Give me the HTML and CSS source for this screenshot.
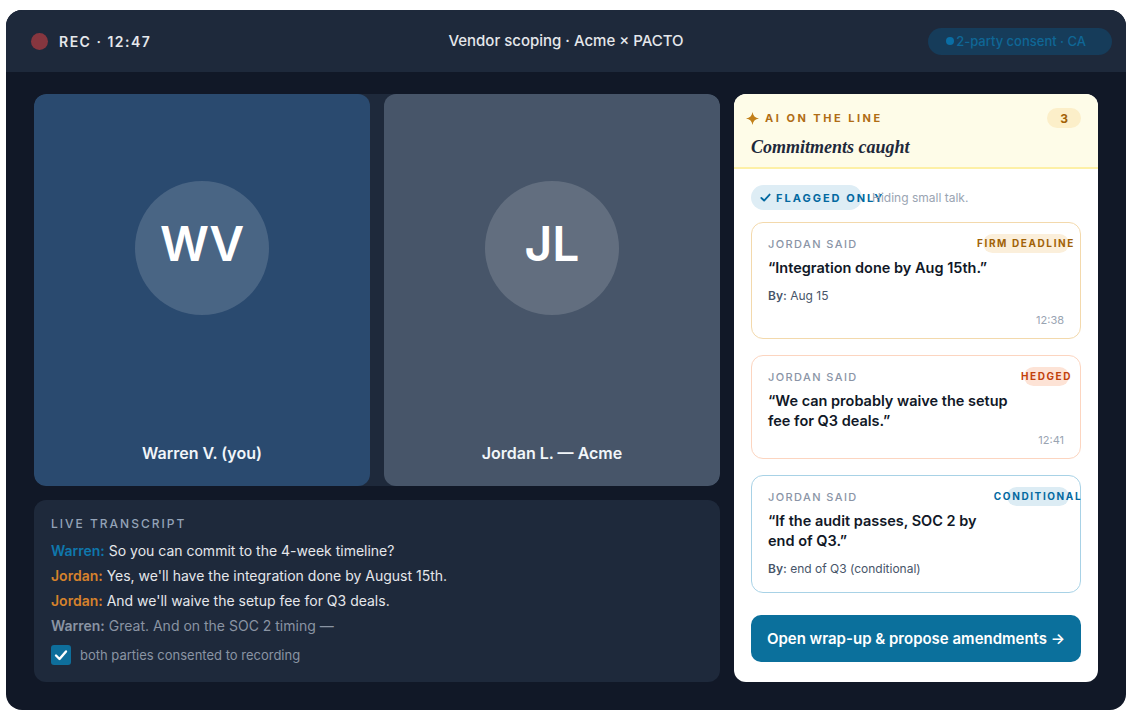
FILE: index.html
```html
<!DOCTYPE html>
<html lang="en">
<head>
<meta charset="utf-8">
<title>Vendor scoping · Acme × PACTO</title>
<link rel="stylesheet" href="styles.css">
</head>
<body>
<div class="frame">
  <header class="topbar">
    <div class="rec"><span class="rec-dot"></span><span>REC · 12:47</span></div>
    <div class="title">Vendor scoping · Acme × PACTO</div>
    <div class="top-right"><span class="consent"><span class="consent-dot"></span>2-party consent · CA</span></div>
  </header>
  <main class="main">
    <section class="left">
      <div class="tiles">
        <div class="tile tile-me">
          <div class="av-wrap"><div class="avatar">WV</div></div>
          <div class="name">Warren V. (you)</div>
        </div>
        <div class="tile tile-them">
          <div class="av-wrap"><div class="avatar">JL</div></div>
          <div class="name">Jordan L. — Acme</div>
        </div>
      </div>
      <div class="transcript">
        <div class="t-label">LIVE TRANSCRIPT</div>
        <div class="t-line"><span class="sp-w">Warren:</span> So you can commit to the 4-week timeline?</div>
        <div class="t-line"><span class="sp-j">Jordan:</span> Yes, we'll have the integration done by August 15th.</div>
        <div class="t-line"><span class="sp-j">Jordan:</span> And we'll waive the setup fee for Q3 deals.</div>
        <div class="t-line t-dim"><span class="sp-d">Warren:</span> Great. And on the SOC 2 timing —</div>
        <div class="consent-row">
          <span class="checkbox"><svg viewBox="0 0 20 20" width="20" height="20"><path d="M5 10.5 L8.5 14 L15 6.5" fill="none" stroke="#fff" stroke-width="2.4" stroke-linecap="round" stroke-linejoin="round"/></svg></span>
          <span class="consent-text">both parties consented to recording</span>
        </div>
      </div>
    </section>
    <aside class="panel">
      <div class="panel-head">
        <div class="ph-row">
          <div class="ph-kicker"><svg class="star" viewBox="0 0 12 12" width="13" height="13"><path d="M6 0 C6.5 3.6 8.4 5.5 12 6 C8.4 6.5 6.5 8.4 6 12 C5.5 8.4 3.6 6.5 0 6 C3.6 5.5 5.5 3.6 6 0 Z" fill="#c2801a"/></svg><span>AI ON THE LINE</span></div>
          <span class="count">3</span>
        </div>
        <div class="ph-title">Commitments caught</div>
      </div>
      <div class="panel-body">
        <div class="filter-row">
          <span class="flag-pill"><svg viewBox="0 0 12 12" width="11" height="11"><path d="M1.5 6.5 L4.5 9.3 L10.5 2.8" fill="none" stroke="#0369a1" stroke-width="2" stroke-linecap="round" stroke-linejoin="round"/></svg><span>FLAGGED ONLY</span></span>
          <span class="hiding">Hiding small talk.</span>
        </div>
        <div class="cards">
          <div class="card card-firm">
            <div class="card-top"><span class="said">JORDAN SAID</span><span class="tag tag-firm">FIRM DEADLINE</span></div>
            <div class="quote">“Integration done by Aug 15th.”</div>
            <div class="by"><b>By:</b> Aug 15</div>
            <div class="time">12:38</div>
          </div>
          <div class="card card-hedged">
            <div class="card-top"><span class="said">JORDAN SAID</span><span class="tag tag-hedged">HEDGED</span></div>
            <div class="quote">“We can probably waive the setup fee for Q3 deals.”</div>
            <div class="time">12:41</div>
          </div>
          <div class="card card-cond">
            <div class="card-top"><span class="said">JORDAN SAID</span><span class="tag tag-cond">CONDITIONAL</span></div>
            <div class="quote">“If the audit passes, SOC 2 by end&nbsp;of&nbsp;Q3.”</div>
            <div class="by"><b>By:</b> end of Q3 (conditional)</div>
          </div>
        </div>
        <button class="cta">Open wrap-up &amp; propose amendments →</button>
      </div>
    </aside>
  </main>
</div>
</body>
</html>
```

FILE: styles.css
```css
* { box-sizing: border-box; }
body {
  margin: 0;
  background: #ffffff;
  font-family: Inter, "Noto Sans", sans-serif;
}
.frame {
  margin: 10px 0 0 6px;
  width: 1120px;
  height: 700px;
  background: #111827;
  border-radius: 16px;
  overflow: hidden;
  display: flex;
  flex-direction: column;
}
.topbar {
  height: 62px;
  flex: none;
  background: #1e293b;
  display: grid;
  grid-template-columns: 1fr auto 1fr;
  align-items: center;
  padding: 0 14px;
}
.rec {
  display: flex;
  align-items: center;
  gap: 11px;
  margin-left: 11px;
  color: #e5e7eb;
  font-size: 14px;
  font-weight: 600;
  letter-spacing: 1.5px;
}
.rec-dot {
  width: 17px;
  height: 17px;
  border-radius: 50%;
  background: #86363f;
}
.title {
  color: #e5e7eb;
  font-size: 15px;
  font-weight: 500;
  margin-top: -1px;
}
.top-right { justify-self: end; }
.consent {
  display: flex;
  align-items: center;
  gap: 2px;
  height: 27px;
  padding: 0 26px 0 18px;
  border-radius: 14px;
  background: #163c5a;
  color: #0f6796;
  font-size: 13px;
  font-weight: 500;
  white-space: nowrap;
}
.consent-dot {
  width: 8px;
  height: 8px;
  border-radius: 50%;
  background: #0a6ea5;
}
.main {
  flex: 1;
  display: grid;
  grid-template-columns: 686px 364px;
  gap: 14px;
  padding: 22px 28px 28px;
  min-height: 0;
}
.left {
  display: flex;
  flex-direction: column;
  gap: 14px;
  min-height: 0;
}
.tiles {
  flex: 1;
  display: grid;
  grid-template-columns: 1fr 1fr;
  gap: 14px;
  background: #1e293b;
  border-radius: 12px;
  overflow: hidden;
}
.tile {
  border-radius: 12px;
  display: flex;
  flex-direction: column;
  align-items: center;
  padding-bottom: 23px;
}
.tile-me { background: #2a4a6f; }
.tile-them { background: #475569; }
.av-wrap {
  flex: 1;
  display: flex;
  align-items: center;
  justify-content: center;
  padding-bottom: 41px;
}
.avatar {
  width: 134px;
  height: 134px;
  border-radius: 50%;
  background: rgba(255, 255, 255, 0.15);
  color: #ffffff;
  font-size: 48px;
  font-weight: 600;
  display: flex;
  align-items: center;
  justify-content: center;
  padding-bottom: 9px;
}
.name {
  color: #f1f5f9;
  font-size: 16px;
  font-weight: 600;
  line-height: 20px;
}
.transcript {
  flex: none;
  height: 182px;
  background: #1e293b;
  border-radius: 12px;
  padding: 16px 17px;
}
.t-label {
  color: #94a3b8;
  font-size: 12px;
  font-weight: 500;
  letter-spacing: 2px;
  line-height: 16px;
  margin-bottom: 6px;
}
.t-line {
  color: #e5e7eb;
  font-size: 14px;
  line-height: 25px;
}
.sp-w { color: #0f77ac; font-weight: 600; }
.sp-j { color: #d6822c; font-weight: 600; }
.sp-d { font-weight: 600; }
.t-dim { color: #8a94a3; }
.consent-row {
  display: flex;
  align-items: center;
  gap: 9px;
  margin-top: 7px;
}
.checkbox {
  width: 20px;
  height: 20px;
  border-radius: 3px;
  background: #0e6e9b;
  display: flex;
}
.consent-text {
  color: #8a94a3;
  font-size: 13px;
}
.panel {
  background: #ffffff;
  border-radius: 12px;
  overflow: hidden;
  display: flex;
  flex-direction: column;
}
.panel-head {
  flex: none;
  background: #fefce8;
  border-bottom: 2px solid #fdf0a6;
  padding: 14px 17px 9px 12px;
}
.ph-row {
  display: flex;
  align-items: center;
  justify-content: space-between;
  height: 20px;
}
.ph-kicker {
  display: flex;
  align-items: center;
  gap: 6px;
  color: #b06d15;
  font-size: 11px;
  font-weight: 700;
  letter-spacing: 2.5px;
}
.star { display: block; }
.count {
  width: 34px;
  height: 20px;
  border-radius: 10px;
  background: #fcefc9;
  color: #a16207;
  font-size: 12px;
  font-weight: 700;
  display: flex;
  align-items: center;
  justify-content: center;
}
.ph-title {
  margin-top: 8px;
  padding-left: 5px;
  font-family: "Liberation Serif", "Times New Roman", serif;
  font-style: italic;
  font-weight: 700;
  font-size: 18px;
  line-height: 22px;
  color: #1e293b;
}
.panel-body {
  flex: 1;
  display: flex;
  flex-direction: column;
  padding: 16px 17px 20px;
}
.filter-row {
  display: flex;
  align-items: center;
  gap: 10px;
  height: 25px;
}
.flag-pill {
  width: 111px;
  height: 25px;
  border-radius: 13px;
  background: #deedf5;
  display: flex;
  align-items: center;
  gap: 5px;
  padding-left: 9px;
  white-space: nowrap;
  color: #0369a1;
  font-size: 11px;
  font-weight: 700;
  letter-spacing: 2px;
  flex: none;
}
.flag-pill svg { flex: none; }
.hiding {
  color: #9aa4b2;
  font-size: 12px;
  white-space: nowrap;
}
.cards {
  margin-top: 12px;
  display: flex;
  flex-direction: column;
  gap: 16px;
}
.card {
  border-radius: 12px;
  border: 1.5px solid #f3d9ac;
  padding: 10px 16px 10px;
}
.card-firm { border-color: #f3d9ac; }
.card-hedged { border-color: #fcd5c0; }
.card-cond { border-color: #a8d2e6; }
.card-top {
  display: flex;
  align-items: center;
  justify-content: space-between;
  height: 20px;
}
.said {
  color: #8a94a6;
  font-size: 11px;
  font-weight: 500;
  letter-spacing: 1.4px;
  margin-top: 2px;
}
.tag {
  height: 19px;
  border-radius: 10px;
  display: flex;
  align-items: center;
  justify-content: center;
  white-space: nowrap;
  font-size: 10px;
  font-weight: 700;
  letter-spacing: 1.6px;
  margin-right: -5px;
}
.tag-firm { width: 86px; background: #fbefdb; color: #a16207; }
.tag-hedged { width: 45px; background: #fde3d6; color: #c2410c; }
.tag-cond { width: 62px; background: #dcecf4; color: #0369a1; }
.quote {
  margin-top: 5px;
  max-width: 248px;
  color: #111827;
  font-size: 14.5px;
  font-weight: 600;
  line-height: 20px;
}
.by {
  margin-top: 9px;
  margin-bottom: 4px;
  color: #475569;
  font-size: 12px;
  line-height: 18px;
}
.by b { font-weight: 600; }
.time {
  text-align: right;
  color: #9aa4b2;
  font-size: 11px;
  line-height: 16px;
}
.by + .time { margin-top: 7px; }
.quote + .time { margin-top: 1px; }
.cta {
  margin-top: auto;
  height: 47px;
  border: none;
  border-radius: 10px;
  background: #0b709c;
  color: #ffffff;
  font-family: Inter, "Noto Sans", sans-serif;
  font-size: 15px;
  font-weight: 600;
  cursor: pointer;
}
```
